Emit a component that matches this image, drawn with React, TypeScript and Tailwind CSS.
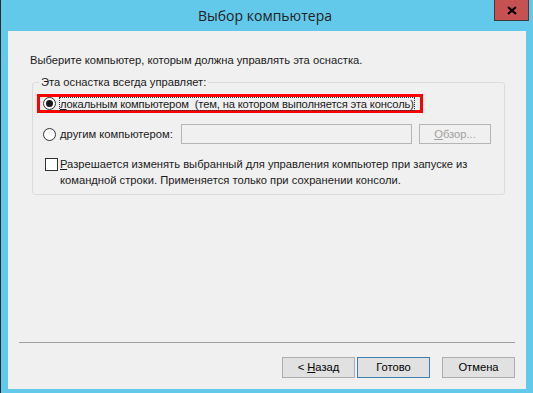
import React from "react"

const font = { fontFamily: "'Open Sans', 'Noto Sans', sans-serif" }

function Radio({ checked }: { checked?: boolean }) {
  return (
    <span className="flex h-[13px] w-[13px] shrink-0 items-center justify-center rounded-full border border-[#333] bg-white">
      {checked && <span className="h-[7px] w-[7px] rounded-full bg-[#1a1a1a]" />}
    </span>
  )
}

function Btn({ children, primary }: { children: React.ReactNode; primary?: boolean }) {
  return (
    <button
      className={
        "flex h-[21px] w-[73px] items-center justify-center border bg-[#e1e1e1] text-[11.2px] text-black " +
        (primary ? "border-[#3c7fb1]" : "border-[#adadad]")
      }
    >
      {children}
    </button>
  )
}

export default function App() {
  return (
    <div
      className="flex h-[393px] w-[533px] flex-col border-l border-[#2b2b2b] bg-[#63c9ea] text-[11.2px] text-[#1a1a1a]"
      style={{ fontFamily: "'Liberation Sans', 'Noto Sans', sans-serif" }}
    >
      {/* title bar */}
      <div className="flex h-[31px] shrink-0 items-start">
        <div className="w-[123px]" />
        <span className="flex h-[31px] flex-1 items-center justify-center text-[14px] text-[#222]" style={font}>
          Выбор компьютера
        </span>
        <div className="ml-[88px] mr-[4px] flex h-[21px] w-[35px] items-center justify-center border border-t-0 border-[#3c3c3c] bg-[#c75050]">
          <svg width="10" height="9" viewBox="0 0 10 9">
            <path d="M1 1 L9 8 M9 1 L1 8" stroke="#000" strokeWidth="2.2" />
          </svg>
        </div>
      </div>

      {/* client area */}
      <div className="ml-[7px] flex h-[358px] w-[518px] flex-col bg-[#f0f0f0]">
        <p className="ml-[22px] mt-[22px] leading-[14px]">
          Выберите компьютер, которым должна управлять эта оснастка.
        </p>

        <fieldset className="ml-[24px] mt-[8px] h-[120px] w-[473px] rounded-[3px] border border-[#dcdcdc] px-[4px]">
          <legend className="ml-[2px] px-[2px] leading-[14px]">Эта оснастка всегда управляет:</legend>

          <div className="mt-[5px] flex h-[19px] w-[386px] items-center border-[3px] border-[#ff0000] pl-[3px]">
            <Radio checked />
            <span className="ml-[3px] whitespace-pre border border-dotted border-[#333] leading-[12px] tracking-[-0.15px]">
              <span className="underline">л</span>окальным компьютером  (тем, на котором выполняется эта консоль)
            </span>
          </div>

          <div className="mt-[11px] flex items-center pl-[6px]">
            <Radio />
            <span className="ml-[4px] w-[121px] whitespace-nowrap">
              <span className="underline">д</span>ругим компьютером:
            </span>
            <div className="h-[20px] w-[231px] border border-[#b5b5b5] bg-[#f0f0f0]" />
            <div className="ml-[7px] flex h-[20px] w-[72px] items-center justify-center border border-[#b5b5b5] text-[#a0a0a0]">
              <span className="underline">О</span>бзор...
            </div>
          </div>

          <div className="mt-[12px] flex items-start pl-[8px]">
            <span className="mt-[2px] h-[13px] w-[13px] shrink-0 border border-[#333] bg-white" />
            <span className="ml-[2px] leading-[16px]">
              <span className="underline">Р</span>азрешается изменять выбранный для управления компьютер при запуске из
              <br />
              командной строки. Применяется только при сохранении консоли.
            </span>
          </div>
        </fieldset>

        <div className="flex-1" />

        <div className="ml-[11px] h-px w-[496px] bg-[#a0a0a0]" />
        <div className="mb-[11px] mt-[14px] flex pr-[11px]">
          <div className="flex-1" />
          <Btn>
            &lt; <span className="ml-[3px] underline">Н</span>азад
          </Btn>
          <div className="ml-[2px]">
            <Btn primary>Готово</Btn>
          </div>
          <div className="ml-[12px]">
            <Btn>Отмена</Btn>
          </div>
        </div>
      </div>
    </div>
  )
}
